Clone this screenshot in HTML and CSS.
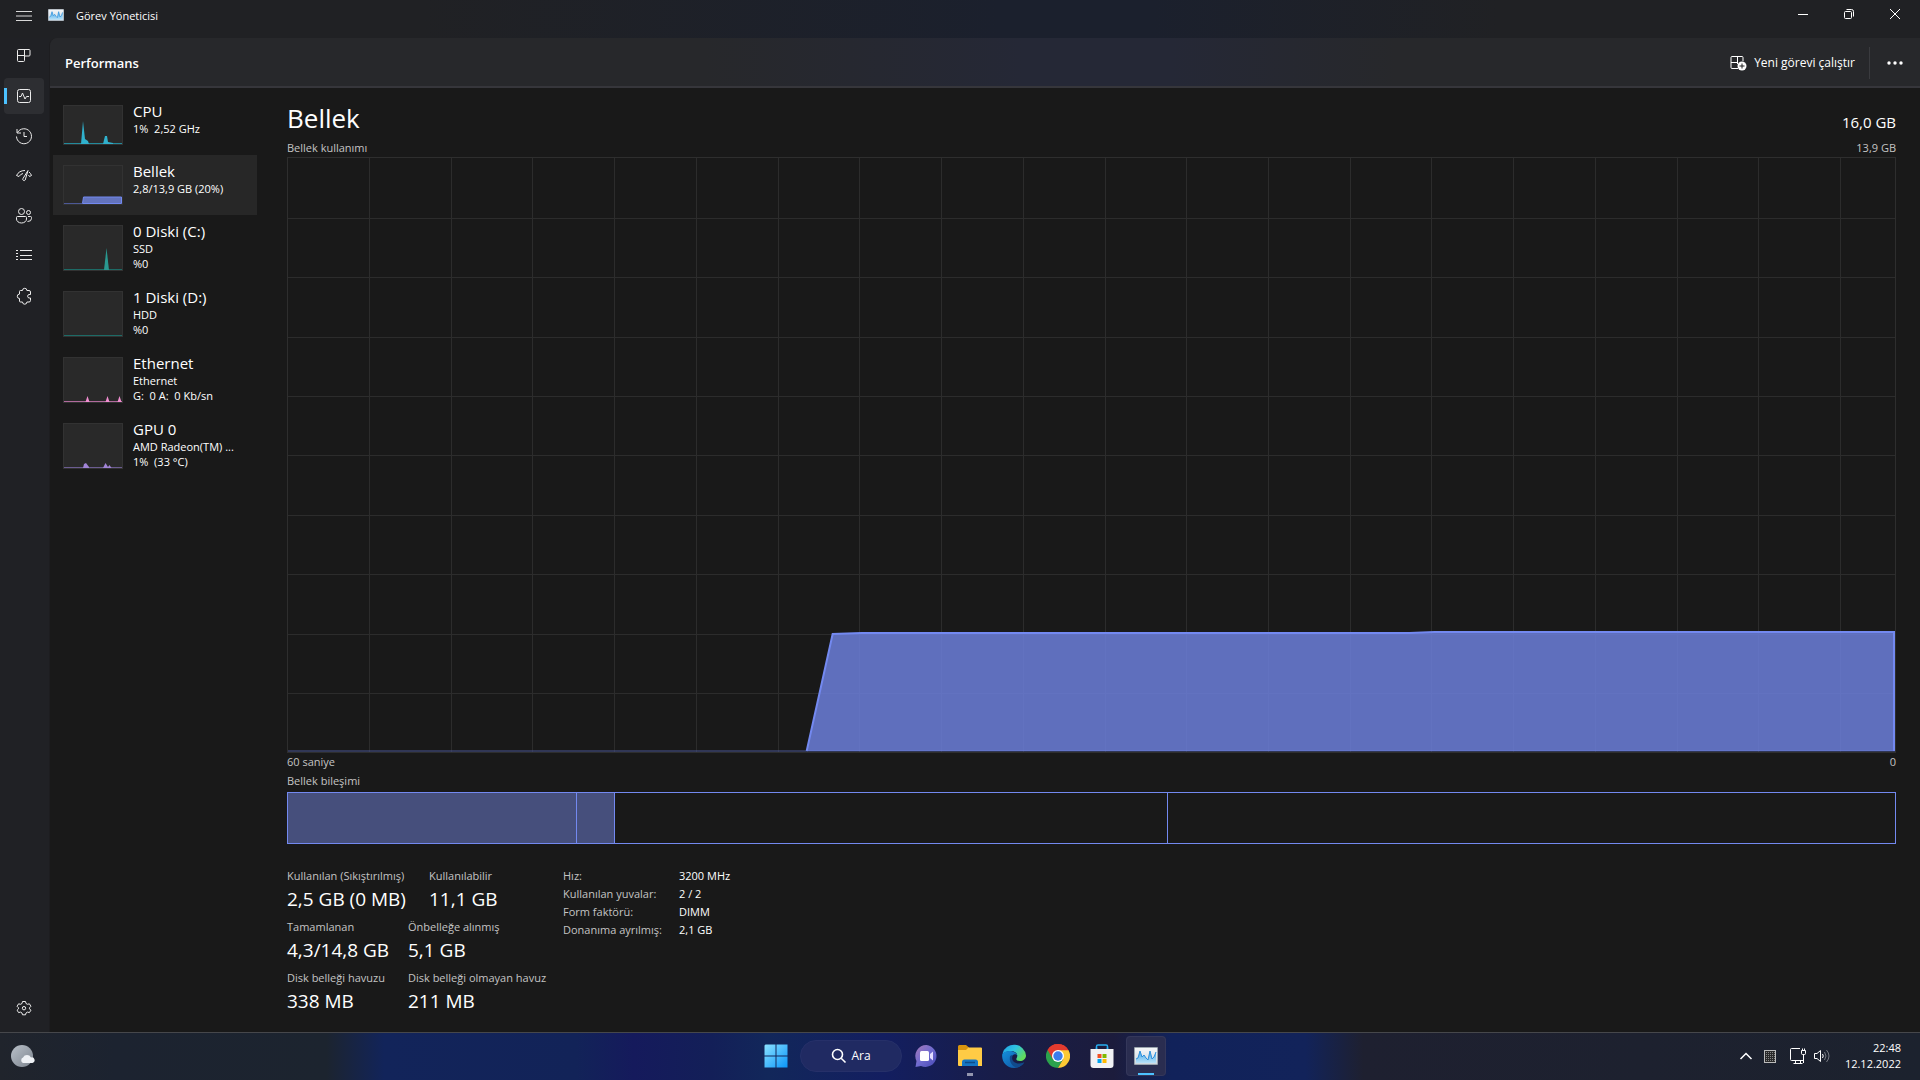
FILE: index.html
```html
<!DOCTYPE html>
<html lang="tr">
<head>
<meta charset="utf-8">
<title>Görev Yöneticisi</title>
<link rel="stylesheet" href="styles.css">
</head>
<body>
<svg class="defs" aria-hidden="true">
  <defs>
    <linearGradient id="tm-frame" x1="0" y1="0" x2="0" y2="1"><stop offset="0" stop-color="#f4f6f8"/><stop offset="1" stop-color="#cfd8e0"/></linearGradient>
    <linearGradient id="tm-area" x1="0" y1="0" x2="0" y2="1"><stop offset="0" stop-color="#3fa4e8"/><stop offset="1" stop-color="#b9e2f8"/></linearGradient>
    <symbol id="tm-icon" viewBox="0 0 24 18">
      <rect width="24" height="18" rx="1" fill="#9aa4ad"/>
      <rect x="1" y="1" width="22" height="16" fill="url(#tm-frame)"/>
      <path d="M2 16V12L4 11 6 4 8 10 10 8 12 11 14 13 16 4 18 12 20 10 22 5V16Z" fill="url(#tm-area)"/>
      <path d="M2 12 4 11 6 4 8 10 10 8 12 11 14 13 16 4 18 12 20 10 22 5" fill="none" stroke="#2b8fdc"/>
    </symbol>
  </defs>
</svg>

<div class="window">
  <header class="titlebar">
    <button class="menu" aria-label="Menü"><svg width="16" height="12" viewBox="0 0 16 12"><path d="M0 1.500H16M0 6H16M0 10.500H16" stroke="#d8d8d8"/></svg></button>
    <svg class="app-icon" width="16" height="12"><use href="#tm-icon"/></svg>
    <span class="app-name">Görev Yöneticisi</span>
    <div class="window-buttons">
      <button aria-label="Simge durumuna küçült"><svg width="12" height="12" viewBox="0 0 12 12"><path d="M1 6.500H11"/></svg></button>
      <button aria-label="Geri yükle"><svg width="12" height="12" viewBox="0 0 12 12"><rect x="1.500" y="3.500" width="7" height="7" rx="1"/><path d="M3.500 1.500H8.500a2 2 0 0 1 2 2V8.500"/></svg></button>
      <button aria-label="Kapat"><svg width="12" height="12" viewBox="0 0 12 12"><path d="M1 1 11 11M11 1 1 11"/></svg></button>
    </div>
  </header>

  <div class="frame">
    <nav class="rail" aria-label="Sayfalar">
      <button aria-label="İşlemler"><svg width="16" height="16" viewBox="0 1 16 16"><path d="M2.500 2.500H13a1 1 0 0 1 1 1V8a1 1 0 0 1-1 1H8.500V13.500a1 1 0 0 1-1 1H2.500a1 1 0 0 1-1-1V3.500a1 1 0 0 1 1-1ZM8.500 2.500V9M1.500 8.500H8.500"/></svg></button>
      <button class="active" aria-label="Performans"><svg width="16" height="16" viewBox="0 0 16 16"><rect x="1.500" y="1.500" width="13" height="13" rx="2"/><path d="M3 8.500H5L6.500 5 9 11 10.500 8.500H13"/></svg></button>
      <button aria-label="Uygulama geçmişi"><svg width="18" height="18" viewBox="0 0 18 18"><path d="M2.500 5.500A7.500 7.500 0 1 1 1.500 9.500M2 2V6H6M9 5V9.500H12"/></svg></button>
      <button aria-label="Başlangıç uygulamaları"><svg width="18" height="18" viewBox="0 0 18 18"><path d="M1.500 8.500Q4 3.500 10 3.500M14 5Q15.800 6.500 16.500 8.500M1.500 8.500 4 9.500Q5.500 7 8 6.500M16.500 8.500 14.500 9.500 13.500 8M13 3.500 8 11.500a1.200 1.200 0 0 0 2.200 1.500Z"/></svg></button>
      <button aria-label="Kullanıcılar"><svg width="18" height="18" viewBox="0 0 18 18"><circle cx="6.500" cy="4.500" r="3"/><circle cx="13.500" cy="5.500" r="2"/><path d="M2.500 9.500H10.500a1 1 0 0 1 1 1V12a5 4 0 0 1-10 0V10.500a1 1 0 0 1 1-1ZM13 9.500H15.500a1 1 0 0 1 1 1V11.500Q16.500 14.500 12.500 14.500"/></svg></button>
      <button aria-label="Ayrıntılar"><svg width="16" height="16" viewBox="0 1 16 16"><path d="M4 3.500H16M4 8.500H16M4 12.500H16"/><path d="M0 3.500H2M0 6.500H2M0 9.500H2M0 12.500H2"/></svg></button>
      <button aria-label="Hizmetler"><svg width="18" height="18" viewBox="0 0 18 18"><path d="M5.500 3.500H7.500a2.200 2.200 0 0 1 4.400 0H14a1.500 1.500 0 0 1 1.500 1.500V7.500H14a1.800 1.800 0 0 0 0 3.500H15.500V13.500A1.500 1.500 0 0 1 14 15H11.900a2.200 2.200 0 0 1-4.400 0H5.500A1 1 0 0 1 4.500 14V11.500a2.200 2.200 0 0 1 0-4.400V4.500A1 1 0 0 1 5.500 3.500Z"/></svg></button>
      <button class="settings" aria-label="Ayarlar"><svg width="16" height="16" viewBox="0 0 16 16"><path d="M6.500 1.500H9.500L10 3.500 11.500 4.300 13.400 3.800 14.900 6.300 13.500 7.800V8.800L14.900 10.200 13.400 12.600 11.500 12.100 10 13 9.500 14.800H6.500L6 13 4.500 12.100 2.600 12.600 1.100 10.200 2.500 8.800V7.800L1.100 6.300 2.600 3.800 4.500 4.300 6 3.500Z"/><circle cx="8" cy="8.200" r="1.700"/></svg></button>
    </nav>

    <section class="page">
      <header class="page-head">
        <h1>Performans</h1>
        <button class="run"><svg width="17" height="16" viewBox="0 0 17 16"><path d="M8 13.500H2a1 1 0 0 1-1-1V2.500a1 1 0 0 1 1-1H12a1 1 0 0 1 1 1V6M1 7.500H8M7.500 1.500V9" fill="none" stroke="#fff"/><circle cx="12" cy="11" r="4.500" fill="#fff"/><path d="M12 8.500V13.500M9.500 11H14.500" stroke="#222"/></svg>Yeni görevi çalıştır</button>
        <button class="more" aria-label="Diğer seçenekler"><svg width="16" height="4" viewBox="0 0 16 4"><circle cx="2" cy="2" r="1.700"/><circle cx="8" cy="2" r="1.700"/><circle cx="14" cy="2" r="1.700"/></svg></button>
      </header>

      <div class="page-body">
        <nav class="resources" aria-label="Kaynaklar">
          <button class="resource">
            <svg class="thumb short" viewBox="0 0 60 40"><path d="M1 38.500H59" stroke="#238a9c"/><path d="M18 39 20 16 22 34 25 36 26 39ZM40 39 42 31H44L45 37 50 38V39Z" fill="#30b1cd"/></svg>
            <span class="info"><span class="name">CPU</span><span>1% &nbsp;2,52 GHz</span></span>
          </button>
          <button class="resource selected">
            <svg class="thumb short" viewBox="0 0 60 40"><path d="M1 38.500H19" stroke="#4c5896"/><path d="M19.500 38.500 20.500 32H58.500V38.500Z" fill="#6373bd" stroke="#7389f0"/></svg>
            <span class="info"><span class="name">Bellek</span><span>2,8/13,9 GB (20%)</span></span>
          </button>
          <button class="resource">
            <svg class="thumb" viewBox="0 0 60 46"><path d="M1 44.500H59" stroke="#1d6b66"/><path d="M41 45 43.500 23 46 45Z" fill="#2a9890"/></svg>
            <span class="info"><span class="name">0 Diski (C:)</span><span>SSD</span><span>%0</span></span>
          </button>
          <button class="resource">
            <svg class="thumb" viewBox="0 0 60 46"><path d="M1 44.500H59" stroke="#1d6b66"/></svg>
            <span class="info"><span class="name">1 Diski (D:)</span><span>HDD</span><span>%0</span></span>
          </button>
          <button class="resource">
            <svg class="thumb" viewBox="0 0 60 46"><path d="M1 44.500H59" stroke="#b06a9c"/><path d="M22.500 45 24.500 39 26.500 45ZM42.500 45 44.500 39 46.500 45ZM54.500 45 56.500 39 58.500 45Z" fill="#f08dd0"/></svg>
            <span class="info"><span class="name">Ethernet</span><span>Ethernet</span><span>G: &nbsp;0 A: &nbsp;0 Kb/sn</span></span>
          </button>
          <button class="resource">
            <svg class="thumb" viewBox="0 0 60 46"><path d="M1 44.500H59" stroke="#6b5c90"/><path d="M20 45 21 41 23 40 26 44V45ZM40 45 42.500 40 45 44 46.500 42 48.500 45Z" fill="#a184d6"/></svg>
            <span class="info"><span class="name">GPU 0</span><span>AMD Radeon(TM) ...</span><span>1% &nbsp;(33 °C)</span></span>
          </button>
        </nav>

        <main class="detail">
          <div class="line heading"><h2>Bellek</h2><span class="total">16,0 GB</span></div>
          <div class="line caption"><span>Bellek kullanımı</span><span>13,9 GB</span></div>
          <svg class="chart" viewBox="0 0 1608 594" preserveAspectRatio="none" role="img" aria-label="Bellek kullanımı">
            <path class="grid" d="M82 0V594M164 0V594M245 0V594M327 0V594M409 0V594M491 0V594M572 0V594M654 0V594M736 0V594M818 0V594M899 0V594M981 0V594M1063 0V594M1144 0V594M1226 0V594M1308 0V594M1390 0V594M1471 0V594M1553 0V594M0 60H1608M0 119H1608M0 179H1608M0 238H1608M0 297H1608M0 357H1608M0 416H1608M0 476H1608M0 535H1608"/>
            <path class="baseline" d="M0 593H1608"/>
            <path class="area" d="M519 593 545 476 574 475H1122L1147 474H1608V593Z"/>
            <path class="curve" d="M519 593 545 476 574 475H1122L1147 474H1607V593"/>
          </svg>
          <div class="line caption"><span>60 saniye</span><span>0</span></div>
          <div class="line caption composition-title"><span>Bellek bileşimi</span></div>
          <div class="composition">
            <div class="used" style="width:18%"></div>
            <div class="used" style="width:2.36%"></div>
            <div class="standby" style="width:34.42%"></div>
          </div>

          <div class="stats">
            <div class="stat-groups">
              <dl class="stat-row wide">
                <div><dt>Kullanılan (Sıkıştırılmış)</dt><dd>2,5 GB (0 MB)</dd></div>
                <div><dt>Kullanılabilir</dt><dd>11,1 GB</dd></div>
              </dl>
              <dl class="stat-row">
                <div><dt>Tamamlanan</dt><dd>4,3/14,8 GB</dd></div>
                <div><dt>Önbelleğe alınmış</dt><dd>5,1 GB</dd></div>
              </dl>
              <dl class="stat-row">
                <div><dt>Disk belleği havuzu</dt><dd>338 MB</dd></div>
                <div><dt>Disk belleği olmayan havuz</dt><dd>211 MB</dd></div>
              </dl>
            </div>
            <table class="specs">
              <tr><th scope="row">Hız:</th><td>3200 MHz</td></tr>
              <tr><th scope="row">Kullanılan yuvalar:</th><td>2 / 2</td></tr>
              <tr><th scope="row">Form faktörü:</th><td>DIMM</td></tr>
              <tr><th scope="row">Donanıma ayrılmış:</th><td>2,1 GB</td></tr>
            </table>
          </div>
        </main>
      </div>
    </section>
  </div>
</div>

<footer class="taskbar">
  <button class="weather" aria-label="Hava durumu"><svg width="24" height="24" viewBox="0 0 24 24"><defs><linearGradient id="moon" x1="0" y1="0" x2="1" y2="1"><stop offset="0" stop-color="#b9c0c9"/><stop offset="1" stop-color="#7d858f"/></linearGradient></defs><circle cx="11" cy="12" r="11" fill="url(#moon)"/><path d="M12 19a3 3 0 0 1 0-5.500A4.500 4.500 0 0 1 20 13.500 2.800 2.800 0 0 1 21.500 19Z" fill="#eef1f5"/></svg></button>

  <div class="apps">
    <button class="app" aria-label="Başlat"><svg width="24" height="24" viewBox="0 0 24 24"><defs><linearGradient id="win" x1="0" y1="0" x2="1" y2="1"><stop offset="0" stop-color="#8be2ff"/><stop offset="1" stop-color="#0a95fa"/></linearGradient></defs><path d="M1.500 .5H11.500V11.500H.5V1.500ZM12.500 .5H23.500V11.500H12.500ZM.5 12.500H11.500V23.500H.5ZM12.500 12.500H23.500V23.500H12.500Z" fill="url(#win)"/></svg></button>
    <button class="search"><svg width="16" height="16" viewBox="0 0 16 16"><circle cx="6.500" cy="6.500" r="5" fill="none" stroke="#fff" stroke-width="1.600"/><path d="M10.200 10.200 14.500 14.500" stroke="#fff" stroke-width="1.600"/></svg>Ara</button>
    <button class="app" aria-label="Sohbet"><svg width="24" height="24" viewBox="0 0 24 24"><defs><linearGradient id="chat" x1="0" y1="0" x2="1" y2="1"><stop offset="0" stop-color="#a779b8"/><stop offset=".5" stop-color="#6f6bd0"/><stop offset="1" stop-color="#4648b4"/></linearGradient></defs><path d="M12.500 1A11 11 0 1 1 7 22L1.500 23 2.500 17A11 11 0 0 1 12.500 1Z" fill="url(#chat)"/><rect x="6" y="7" width="9" height="10" rx="1.500" fill="#fff"/><path d="M16 10 19 7.500V16.500L16 14Z" fill="#e2ddff"/></svg></button>
    <button class="app open" aria-label="Dosya Gezgini"><svg width="24" height="24" viewBox="0 0 24 24"><path d="M0 2.500Q0 1 1.500 1H8L11 3.500V8H0Z" fill="#d9950e"/><path d="M0 6H8L10.500 3.500H23Q24 3.500 24 4.500V22H1Q0 22 0 21Z" fill="#ffcb45"/><path d="M4 22V18Q4 15.500 6.500 15.500H17.500Q20 15.500 20 18V22Z" fill="#1576c4"/><path d="M7 18.500H17" stroke="#0d4c88" stroke-width="1.500"/></svg></button>
    <button class="app" aria-label="Microsoft Edge"><svg width="24" height="24" viewBox="0 0 24 24"><defs><linearGradient id="edge-top" x1="0" y1="0" x2="1" y2=".6"><stop offset="0" stop-color="#1e9ee8"/><stop offset=".5" stop-color="#2fc4e0"/><stop offset="1" stop-color="#62dc5a"/></linearGradient><linearGradient id="edge-low" x1="0" y1="0" x2="1" y2="1"><stop offset="0" stop-color="#1491dc"/><stop offset="1" stop-color="#104f9c"/></linearGradient></defs><path d="M.5 9.500A12 12 0 0 1 24 11.500C24 15 21 17 18 17 15.500 17 14.300 16 14.300 15 14.300 14.300 15.300 13.600 15.300 11.500 15 8.500 12 7 9 7 5 7 1.500 9 .5 9.500Z" fill="url(#edge-top)"/><path d="M.3 10C2 7.500 5.500 6.500 9 7 12.500 7.500 15.300 9.500 15.300 11.800 14.500 10.300 12.500 9.800 11 11 8.500 13 9 17 12 19 15 21 19.500 20.300 22 18.500 20 22 16 24 12 24 4 23.800-.8 17 .3 10Z" fill="url(#edge-low)"/><path d="M8 12.500C7 17 9.500 22 14.500 23.600 18 23 21 20.500 22.300 18.300 18 20.300 14 19.800 11.500 17.500 9.800 15.800 9.800 13 11 11 9.500 11 8.300 11.500 8 12.500Z" fill="#114a8b"/></svg></button>
    <button class="app" aria-label="Google Chrome"><svg width="24" height="24" viewBox="0 0 24 24"><path d="M12 12 1.600 6A12 12 0 0 1 22.400 6Z" fill="#e33b2e"/><path d="M12 12 1.600 6A12 12 0 0 0 12 24L17.200 15Z" fill="#2ba24c"/><path d="M12 6H22.400A12 12 0 0 1 12 24L17.200 15 12 12Z" fill="#fcc934"/><path d="M12 6.200H22.400A12 12 0 0 0 1.600 6L6.800 15 12 12Z" fill="#e33b2e"/><circle cx="12" cy="12" r="6" fill="#fff"/><circle cx="12" cy="12" r="4.700" fill="#3b7ded"/></svg></button>
    <button class="app" aria-label="Microsoft Store"><svg width="24" height="24" viewBox="0 0 24 24"><path d="M6.500 7V2.500Q6.500 1 8 1H16Q17.500 1 17.500 2.500V7" fill="none" stroke="#27aef0" stroke-width="1.500"/><path d="M.5 5H23.500V21Q23.500 24 20.500 24H3.500Q.5 24 .5 21Z" fill="#f1f2f4"/><path d="M7.500 10H11.500V14H7.500Z" fill="#f25022"/><path d="M12.500 10H16.500V14H12.500Z" fill="#7fba00"/><path d="M7.500 15H11.500V19H7.500Z" fill="#00a4ef"/><path d="M12.500 15H16.500V19H12.500Z" fill="#ffb900"/><path d="M6.500 5V3.500M17.500 5V3.500" stroke="#27aef0" stroke-width="1.500"/></svg></button>
    <button class="app current" aria-label="Görev Yöneticisi"><svg width="24" height="18"><use href="#tm-icon"/></svg></button>
  </div>

  <div class="tray">
    <button aria-label="Gizli simgeler"><svg width="14" height="8" viewBox="0 0 14 8"><path d="M1.500 7 7 1.500 12.500 7" stroke-width="1.500"/></svg></button>
    <button aria-label="Bellek göstergesi"><svg width="12" height="13" viewBox="0 0 12 13"><defs><pattern id="cells" width="2" height="2" patternUnits="userSpaceOnUse" stroke="none"><rect width="2" height="2" fill="#2a2a2a"/><rect width="1" height="1" fill="#888"/></pattern></defs><rect x=".5" y=".5" width="11" height="12" fill="url(#cells)" stroke="#bbb"/></svg></button>
    <button aria-label="Ağ"><svg width="18" height="16" viewBox="0 0 18 16"><path d="M10 .5H1.500Q.5 .5 .5 1.500V11.500Q.5 12.500 1.500 12.500H13.500M5.500 12.500V15M10.500 12.500V15M3.500 15.500H12.500M11.500 2.500H15.500V5.500Q15.500 6.500 14.500 6.500H12.500Q11.500 6.500 11.500 5.500ZM12.500 .5V2M14.500 .5V2M13.500 6.500V15"/></svg></button>
    <button aria-label="Ses"><svg width="17" height="14" viewBox="0 0 17 14"><path d="M.5 4.500H3L6.500 1.500V12.500L3 9.500H.5ZM8.500 5Q10 7 8.500 9"/><path d="M10.500 3Q13.500 7 10.500 11M12.500 1Q17.500 7 12.500 13" opacity=".4"/></svg></button>
    <button class="clock"><span>22:48</span><span>12.12.2022</span></button>
  </div>
</footer>
</body>
</html>
```
FILE: styles.css
```css
:root {
  --memory: #7389f0;
  --muted: #c4c4c4;
}

* { box-sizing: border-box; }

body {
  margin: 0;
  min-height: 100vh;
  display: flex;
  flex-direction: column;
  background: #191919;
  color: #fff;
  font: 12px/18px "Open Sans", "Noto Sans", sans-serif;
}

h1, h2, dl, dd { margin: 0; font-weight: 400; }

button {
  display: flex;
  align-items: center;
  justify-content: center;
  padding: 0;
  border: 0;
  background: none;
  color: inherit;
  font: inherit;
  flex: none;
}

svg { display: block; flex: none; }
.defs { position: absolute; width: 0; height: 0; }

.window {
  flex: 1;
  display: flex;
  flex-direction: column;
  background: linear-gradient(90deg, #202124 22%, #1b202d 52%, #1b202d 60%, #202124 78%);
}

/* Title bar */
.titlebar {
  height: 38px;
  display: flex;
  align-items: flex-start;
}
.menu { width: 48px; height: 32px; }
.app-icon { margin: 9px 12px 0 0; }
.app-name { font-size: 11px; line-height: 32px; }
.window-buttons { display: flex; margin-left: auto; padding-right: 2px; }
.window-buttons button { width: 46px; height: 28px; }
.window-buttons svg { fill: none; stroke: #fff; }

/* Navigation rail */
.frame { flex: 1; display: flex; }
.rail {
  width: 49px;
  flex: none;
  display: flex;
  flex-direction: column;
  gap: 4px;
  padding: 0 5px 6px 4px;
  background: #202125;
}
.rail button { height: 36px; border-radius: 4px; }
.rail svg { fill: none; stroke: #ececec; }
.rail .active {
  background: linear-gradient(#4cc2ff, #4cc2ff) 0 50% / 3px 16px no-repeat #2d2e32;
}
.rail .settings { margin-top: auto; }

/* Page */
.page {
  flex: 1;
  min-width: 0;
  display: flex;
  flex-direction: column;
  border-left: 1px solid #1d1d20;
  border-radius: 8px 0 0 0;
  overflow: hidden;
}
.page-head {
  height: 50px;
  display: flex;
  align-items: center;
  padding: 2px 0 0 15px;
  background: linear-gradient(90deg, #27282b 35%, #252836 52%, #252836 60%, #27282b 72%);
  border-bottom: 2px solid #36363b;
}
h1 { flex: 1; font-size: 13px; font-weight: 600; }
.run { gap: 7px; height: 32px; padding-right: 14px; border-right: 1px solid #3a3b3f; }
.more { width: 50px; height: 32px; fill: #fff; }

.page-body { flex: 1; display: flex; background: #191919; }

/* Resource list */
.resources { width: 207px; flex: none; padding: 7px 0 0 3px; }
.resource {
  width: 100%;
  align-items: flex-start;
  justify-content: flex-start;
  gap: 10px;
  padding: 6px 10px 9px;
  text-align: left;
}
.resource.selected { background: #272727; }
.thumb {
  width: 60px;
  height: 46px;
  margin-top: 4px;
  background: #292929;
  outline: 1px solid #323232;
  outline-offset: -1px;
}
.thumb.short { height: 40px; }
.thumb { margin-bottom: 1px; }
.info { display: flex; flex-direction: column; font-size: 11px; line-height: 15px; white-space: nowrap; }
.name { font-size: 15px; line-height: 20px; }

/* Detail pane */
.detail {
  flex: 1;
  min-width: 0;
  display: flex;
  flex-direction: column;
  padding: 12px 24px 18px 30px;
}
.line { display: flex; justify-content: space-between; align-items: baseline; }
.heading { margin-bottom: 4px; }
h2 { font-size: 26px; line-height: 36px; }
.total { font-size: 15px; }
.caption { font-size: 11px; line-height: 16px; color: var(--muted); }

.chart {
  flex: 1 1 300px;
  width: 100%;
  min-height: 300px;
  margin: 1px 0;
  border: 1px solid #2e2e2e;
}
.chart path { fill: none; vector-effect: non-scaling-stroke; }
.chart .grid { stroke: #2c2c2c; shape-rendering: crispEdges; }
.chart .baseline { stroke: #4a5694; }
.chart .area { fill: #7185e6; fill-opacity: .8; }
.chart .curve { stroke: var(--memory); stroke-width: 2px; }

.composition-title { margin: 3px 0; }
.composition { display: flex; height: 52px; border: 1px solid var(--memory); }
.composition div { border-right: 1px solid var(--memory); }
.composition .used { background: #464f7c; }

.stats { display: flex; margin-top: 23px; }
.stat-groups { width: 276px; display: grid; gap: 6px; }
.stat-row { display: grid; grid-template-columns: 121px auto; justify-content: start; white-space: nowrap; }
.stat-row.wide { grid-template-columns: 142px auto; }
dt { font-size: 11px; color: var(--muted); margin-bottom: 1px; }
dd { font-size: 19px; line-height: 26px; }

.specs { border-collapse: collapse; align-self: flex-start; font-size: 11px; white-space: nowrap; }
.specs th, .specs td { padding: 0; font-weight: 400; text-align: left; }
.specs th { width: 116px; color: var(--muted); }

/* Taskbar */
.taskbar {
  height: 48px;
  flex: none;
  display: grid;
  grid-template-columns: 1fr auto 1fr;
  align-items: center;
  padding-bottom: 1px;
  border-top: 1px solid #46474b;
  background: linear-gradient(90deg, #20242c 0, #1c2330 6%, #1c242f 17%, #12245a 20%, #122358 30%, #151a5c 33%, #131f58 37%, #12275a 40%, #131e60 46%, #181d48 52%, #1c1c3c 58%, #11225a 61%, #12235a 68%, #1e2030 71%, #1c222e 100%);
}
.weather { width: 46px; height: 46px; justify-self: start; }
.apps { display: flex; align-items: center; gap: 4px; padding-left: 2px; }
.app {
  width: 40px;
  height: 40px;
  border-radius: 4px;
  background: linear-gradient(transparent, transparent) 50% 100% / 16px 3px no-repeat;
}
.app.open { background-image: linear-gradient(#9396ae, #9396ae); background-size: 6px 3px; }
.app.current {
  background-color: #2a2d50;
  background-image: linear-gradient(#4cc2ff, #4cc2ff);
  outline: 1px solid #34375a;
  outline-offset: -1px;
}
.search {
  width: 102px;
  height: 32px;
  gap: 4px;
  border: 1px solid #263069;
  border-radius: 16px;
  background: #202a62;
}
.tray { justify-self: end; display: flex; align-items: center; padding-right: 19px; }
.tray svg { fill: none; stroke: #fff; }
.tray button { margin-right: 11px; }
.tray button:nth-child(2) { margin-right: 14px; }
.tray button:nth-child(3) { margin-right: 6px; }
.tray .clock { flex-direction: column; align-items: flex-end; margin: 0 0 0 3px; font-size: 11px; line-height: 16px; }
```
